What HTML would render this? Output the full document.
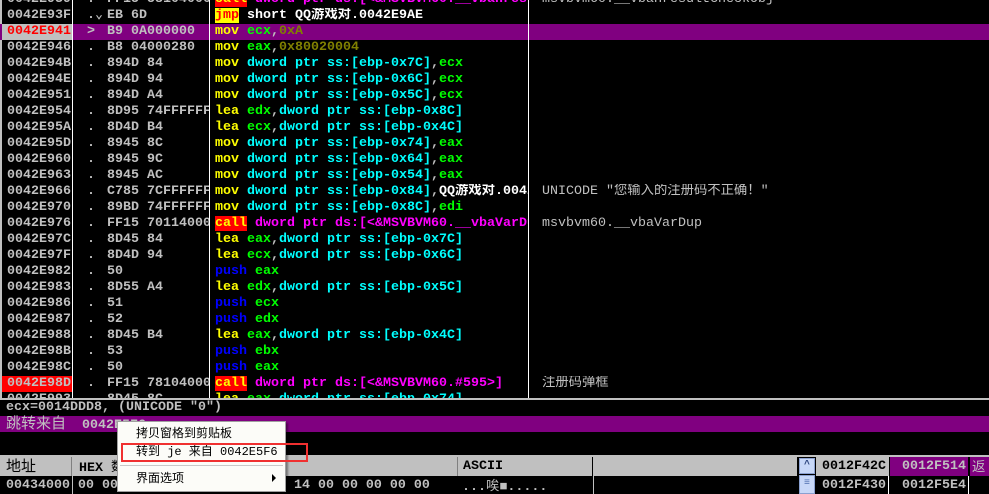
<!DOCTYPE html>
<html><head><meta charset="utf-8"><style>
*{margin:0;padding:0;box-sizing:border-box}
body{width:989px;height:494px;background:#000;position:relative;overflow:hidden;font-family:"Liberation Mono","Noto Sans CJK SC",monospace;font-size:13.33px;font-weight:bold;color:#c0c0c0}
#rows{position:absolute;left:0;top:0;width:989px;height:398px;overflow:hidden}
.r{position:absolute;left:0;width:989px;height:16px;line-height:16px;white-space:pre}
.c{position:absolute;top:0;height:16px;overflow:hidden}
.a{left:2px;width:70px;padding-left:5px}
.m{left:73px;width:30px;padding-left:14px}
.h{left:107px;width:102px}
.d{left:211px;width:317px;padding-left:4px}
.k{left:529px;width:460px;padding-left:13px;font-weight:normal}
.y{color:#ff0}.cy{color:#0ff}.g{color:#0f0}.o{color:#808000}.mg{color:#f0f}.b{color:#00f}.w{color:#fff}
.cl{background:#f00;color:#ff0}
.jp{background:#ff0;color:#f00}
.vl{position:absolute;top:0;width:1px;height:398px;background:#fff}
.cjk{font-family:"Liberation Sans","Noto Sans CJK SC",sans-serif;font-weight:normal}
</style></head><body>
<div style="position:absolute;left:0;top:0;width:2px;height:398px;background:#c0c0c0"></div>
<div id="rows"></div>
<div class="vl" style="left:72px"></div>
<div class="vl" style="left:209px"></div>
<div class="vl" style="left:528px"></div>
<script>
var R=[
["0042E939",".","FF15 58104000",'<span class="cl">call</span> <span class="mg">dword ptr ds:[&lt;&amp;MSVBVM60.__vbaHresultCheckObj&gt;]</span>',"msvbvm60.__vbaHresultCheckObj"],
["0042E93F",".⌄","EB 6D",'<span class="jp">jmp</span> <span class="w">short QQ游戏对.0042E9AE</span>',""],
["0042E941",">","B9 0A000000",'<span class="y">mov</span> <span class="g">ecx</span>,<span class="o">0xA</span>',"",1],
["0042E946",".","B8 04000280",'<span class="y">mov</span> <span class="g">eax</span>,<span class="o">0x80020004</span>',""],
["0042E94B",".","894D 84",'<span class="y">mov</span> <span class="cy">dword ptr ss:[ebp-0x7C]</span>,<span class="g">ecx</span>',""],
["0042E94E",".","894D 94",'<span class="y">mov</span> <span class="cy">dword ptr ss:[ebp-0x6C]</span>,<span class="g">ecx</span>',""],
["0042E951",".","894D A4",'<span class="y">mov</span> <span class="cy">dword ptr ss:[ebp-0x5C]</span>,<span class="g">ecx</span>',""],
["0042E954",".","8D95 74FFFFFF",'<span class="y">lea</span> <span class="g">edx</span>,<span class="cy">dword ptr ss:[ebp-0x8C]</span>',""],
["0042E95A",".","8D4D B4",'<span class="y">lea</span> <span class="g">ecx</span>,<span class="cy">dword ptr ss:[ebp-0x4C]</span>',""],
["0042E95D",".","8945 8C",'<span class="y">mov</span> <span class="cy">dword ptr ss:[ebp-0x74]</span>,<span class="g">eax</span>',""],
["0042E960",".","8945 9C",'<span class="y">mov</span> <span class="cy">dword ptr ss:[ebp-0x64]</span>,<span class="g">eax</span>',""],
["0042E963",".","8945 AC",'<span class="y">mov</span> <span class="cy">dword ptr ss:[ebp-0x54]</span>,<span class="g">eax</span>',""],
["0042E966",".","C785 7CFFFFFF",'<span class="y">mov</span> <span class="cy">dword ptr ss:[ebp-0x84]</span>,<span class="w">QQ游戏对.0042E5B0</span>','UNICODE "您输入的注册码不正确！"'],
["0042E970",".","89BD 74FFFFFF",'<span class="y">mov</span> <span class="cy">dword ptr ss:[ebp-0x8C]</span>,<span class="g">edi</span>',""],
["0042E976",".","FF15 70114000",'<span class="cl">call</span> <span class="mg">dword ptr ds:[&lt;&amp;MSVBVM60.__vbaVarDup&gt;]</span>',"msvbvm60.__vbaVarDup"],
["0042E97C",".","8D45 84",'<span class="y">lea</span> <span class="g">eax</span>,<span class="cy">dword ptr ss:[ebp-0x7C]</span>',""],
["0042E97F",".","8D4D 94",'<span class="y">lea</span> <span class="g">ecx</span>,<span class="cy">dword ptr ss:[ebp-0x6C]</span>',""],
["0042E982",".","50",'<span class="b">push</span> <span class="g">eax</span>',""],
["0042E983",".","8D55 A4",'<span class="y">lea</span> <span class="g">edx</span>,<span class="cy">dword ptr ss:[ebp-0x5C]</span>',""],
["0042E986",".","51",'<span class="b">push</span> <span class="g">ecx</span>',""],
["0042E987",".","52",'<span class="b">push</span> <span class="g">edx</span>',""],
["0042E988",".","8D45 B4",'<span class="y">lea</span> <span class="g">eax</span>,<span class="cy">dword ptr ss:[ebp-0x4C]</span>',""],
["0042E98B",".","53",'<span class="b">push</span> <span class="g">ebx</span>',""],
["0042E98C",".","50",'<span class="b">push</span> <span class="g">eax</span>',""],
["0042E98D",".","FF15 78104000",'<span class="cl">call</span> <span class="mg">dword ptr ds:[&lt;&amp;MSVBVM60.#595&gt;]</span>',"注册码弹框",2],
["0042E993",".","8D45 8C",'<span class="y">lea</span> <span class="g">eax</span>,<span class="cy">dword ptr ss:[ebp-0x74]</span>',""]
];
var h="";
R.forEach(function(r,i){
 var top=-8+16*i;
 var bg=r[5]==1?"background:#800080;":"";
 var ast=r[5]==1?"background:#c0c0c0;color:#f00;":(r[5]==2?"background:#f00;color:#c0c0c0;":"");
 h+='<div class="r" style="top:'+top+'px;'+bg+'"><div class="c a" style="'+ast+'">'+r[0]+'</div><div class="c m">'+r[1]+'</div><div class="c h">'+r[2]+'</div><div class="c d">'+r[3]+'</div><div class="c k">'+r[4]+'</div></div>';
});
document.getElementById("rows").innerHTML=h;
</script>
<div style="position:absolute;left:0;top:398px;width:989px;height:2px;background:#c0c0c0"></div>
<div style="position:absolute;left:6px;top:400px;height:16px;line-height:16px;white-space:pre">ecx=0014DDD8, (UNICODE "0")</div>
<div style="position:absolute;left:0;top:416px;width:989px;height:16px;line-height:16px;background:#800080;white-space:pre;padding-left:6px"><span class="cjk" style="font-size:15px">跳转来自</span>  0042E5F6</div>
<div style="position:absolute;left:0;top:455px;width:989px;height:2px;background:#c0c0c0"></div>
<div style="position:absolute;left:0;top:457px;width:797px;height:19px;background:#c0c0c0;color:#000"></div>
<div style="position:absolute;left:0;top:457px;width:72px;height:19px;line-height:19px;color:#000;padding-left:6px;border-right:1px solid #808080" class="cjk"><span style="font-size:15px">地址</span></div>
<div style="position:absolute;left:74px;top:457px;width:384px;height:19px;line-height:19px;color:#000;padding-left:5px;border-right:1px solid #808080;white-space:pre">HEX <span class="cjk">数据</span></div>
<div style="position:absolute;left:459px;top:457px;width:134px;height:19px;line-height:19px;color:#000;padding-left:4px;border-right:1px solid #000">ASCII</div>
<div style="position:absolute;left:0;top:477px;width:989px;height:17px;line-height:17px;white-space:pre;overflow:hidden"><span style="position:absolute;left:6px">00434000</span><span style="position:absolute;left:78px">00 00 00 00 00 00 00 00 A6 14 00 00 00 00 00</span><span style="position:absolute;left:462px">...<span class="cjk">唉</span>■.....</span></div>
<div style="position:absolute;left:72px;top:476px;width:1px;height:18px;background:#c0c0c0"></div>
<div style="position:absolute;left:593px;top:476px;width:1px;height:18px;background:#c0c0c0"></div>
<div style="position:absolute;left:799px;top:458px;width:16px;height:16px;background:#c8d8f8;border:1px solid #8aa0d0;color:#304880;font-size:10px;line-height:14px;text-align:center">^</div>
<div style="position:absolute;left:799px;top:475px;width:16px;height:19px;background:#c8d8f8;border:1px solid #8aa0d0;color:#5070b0;font-size:10px;line-height:16px;text-align:center">≡</div>
<div style="position:absolute;left:816px;top:457px;width:73px;height:19px;background:#c0c0c0;color:#000;line-height:19px;padding-left:6px">0012F42C</div>
<div style="position:absolute;left:890px;top:457px;width:78px;height:19px;background:#800080;line-height:19px;padding-left:12px">0012F514</div>
<div style="position:absolute;left:970px;top:457px;width:19px;height:19px;background:#800080;line-height:19px;padding-left:2px" class="cjk">返</div>
<div style="position:absolute;left:822px;top:477px;line-height:17px">0012F430</div>
<div style="position:absolute;left:902px;top:477px;line-height:17px">0012F5E4</div>
<div style="position:absolute;left:888px;top:476px;width:1px;height:18px;background:#fff"></div>
<div style="position:absolute;left:968px;top:476px;width:1px;height:18px;background:#fff"></div>
<div style="position:absolute;left:117px;top:421px;width:169px;height:71px;background:#fcfcf8;border:1px solid #a0a0a0;box-shadow:2px 2px 2px rgba(0,0,0,.4);color:#000;font-weight:normal;font-family:'Liberation Sans','Noto Sans CJK SC',sans-serif;font-size:12px">
 <div style="position:absolute;left:18px;top:3px;line-height:16px">拷贝窗格到剪贴板</div>
 <div style="position:absolute;left:18px;top:22px;line-height:16px;white-space:pre;font-family:'Liberation Mono','Noto Sans CJK SC',monospace">转到 je 来自 0042E5F6</div>
 <div style="position:absolute;left:2px;top:43px;width:163px;height:1px;background:#c8c8c8"></div>
 <div style="position:absolute;left:18px;top:48px;line-height:16px">界面选项</div>
 <div style="position:absolute;left:154px;top:52px;width:0;height:0;border-left:4px solid #000;border-top:4px solid transparent;border-bottom:4px solid transparent"></div>
</div>
<div style="position:absolute;left:121px;top:443px;width:187px;height:19px;border:2px solid #f03030"></div>
</body></html>
